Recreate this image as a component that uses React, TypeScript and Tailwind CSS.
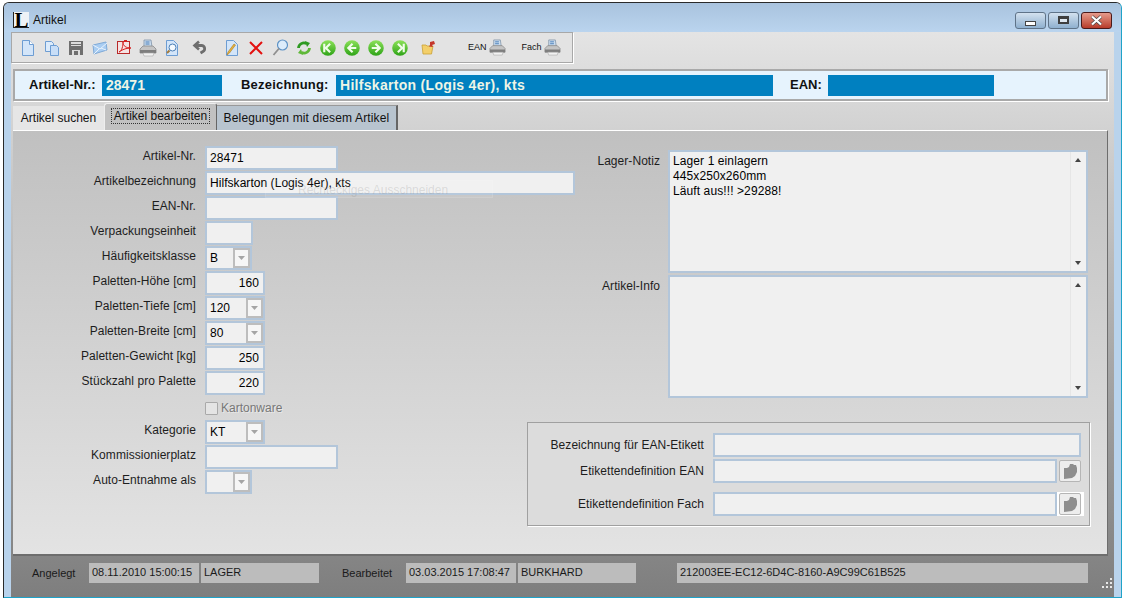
import React from "react";

const F = { fontFamily: '"Liberation Sans", Arial, sans-serif' };

function Page() {
  return (
    <svg width="16" height="18" viewBox="0 0 16 18">
      <path d="M2.5 1.5h7l4 4v11h-11z" fill="#d3e5f9" stroke="#6d9dd3" />
      <path d="M9.5 1.5v4h4" fill="#fff" stroke="#6d9dd3" />
    </svg>
  );
}
function Pages() {
  return (
    <svg width="16" height="18" viewBox="0 0 16 18">
      <path d="M1.5 2.5h6l2 2v8h-8z" fill="#dcebfb" stroke="#6d9dd3" />
      <path d="M6.5 6.5h6l2 2v8h-8z" fill="#c8def7" stroke="#6d9dd3" />
    </svg>
  );
}
function Save() {
  return (
    <svg width="16" height="16" viewBox="0 0 16 16">
      <rect x="1" y="1" width="14" height="14" fill="#6f6f6f" />
      <rect x="3" y="2" width="10" height="2" fill="#ddd" />
      <rect x="3" y="5" width="10" height="1" fill="#ddd" />
      <rect x="4" y="10" width="8" height="5" fill="#ddd" />
      <rect x="6" y="11" width="4" height="4" fill="#6f6f6f" />
    </svg>
  );
}
function Mail() {
  return (
    <svg width="16" height="14" viewBox="0 0 16 14">
      <path d="M1 4l13-3 1 8-13 4z" fill="#a9cdf2" stroke="#7fa9d6" />
      <path d="M1 4l7 4 7-6M2 13l5-5M14 9L9 7" fill="none" stroke="#e8f2fc" />
    </svg>
  );
}
function Pdf() {
  return (
    <svg width="17" height="17" viewBox="0 0 17 17">
      <rect x="1.5" y="2.5" width="12" height="12" fill="#f5e3e3" stroke="#b82a2a" />
      <path d="M3 13c3-1 4-6 4-10 0 4 3 6 8 6-4 0-8 1-12 4z" fill="none" stroke="#d62020" />
      <path d="M8 1h3v2H8z" fill="#d62020" />
    </svg>
  );
}
function Printer({ small }: { small?: boolean }) {
  const s = small ? 17 : 18;
  return (
    <svg width={s} height={s} viewBox="0 0 18 18">
      <path d="M5 1h7l1 7H5z" fill="#c9dcef" stroke="#7f93a8" strokeWidth="0.8" />
      <path d="M6.5 3h4M6.5 5h4" stroke="#4b7fb8" />
      <path d="M1 10l3-3h10l3 3v4H1z" fill="#c4c4c4" stroke="#8a8a8a" strokeWidth="0.8" />
      <path d="M1 11h16v3H1z" fill="#7e7e7e" />
      <path d="M4 14h11l-1 3H5z" fill="#f2f2f2" stroke="#a9a9a9" strokeWidth="0.6" />
    </svg>
  );
}
function Preview() {
  return (
    <svg width="16" height="18" viewBox="0 0 16 18">
      <path d="M2.5 1.5h7l4 4v11h-11z" fill="#d3e5f9" stroke="#6d9dd3" />
      <circle cx="8.5" cy="8.5" r="3.5" fill="#f5fafe" stroke="#4c7fb5" />
      <path d="M5.5 11.5L3 14" stroke="#a57b3c" strokeWidth="2" />
    </svg>
  );
}
function Undo() {
  return (
    <svg width="16" height="15" viewBox="0 0 16 15">
      <path d="M7 1.500L2.500 5.500 7 9.500" fill="none" stroke="#6e6e6e" strokeWidth="2.600" />
      <path d="M3.500 5.500H9.500a3.200 3.200 0 0 1 1.500 6L8.500 13" fill="none" stroke="#6e6e6e" strokeWidth="2.800" />
    </svg>
  );
}
function EditPage() {
  return (
    <svg width="16" height="18" viewBox="0 0 16 18">
      <path d="M2.5 1.5h7l4 4v11h-11z" fill="#d3e5f9" stroke="#6d9dd3" />
      <path d="M3 16l1-3 6-8 1.500 1-6 8z" fill="#e8b33c" stroke="#a87820" strokeWidth="0.6" />
    </svg>
  );
}
function Cross() {
  return (
    <svg width="14" height="14" viewBox="0 0 14 14">
      <path d="M1 1l12 12M13 1L1 13" stroke="#e3110f" strokeWidth="2" />
    </svg>
  );
}
function Search() {
  return (
    <svg width="17" height="17" viewBox="0 0 17 17">
      <circle cx="10.500" cy="6" r="5" fill="#dcecfb" stroke="#5e93c6" strokeWidth="1.200" />
      <path d="M7 9.500L1.500 16" stroke="#8f8f8f" strokeWidth="1.800" />
    </svg>
  );
}
function Refresh() {
  return (
    <svg width="16" height="14" viewBox="0 0 16 14">
      <path d="M2.500 7a5.500 5.500 0 0 1 8-4.500" fill="none" stroke="#2f9a22" strokeWidth="2.800" />
      <path d="M13.500 7a5.500 5.500 0 0 1-8 4.500" fill="none" stroke="#5fb838" strokeWidth="2.800" />
      <path d="M9 0l5 2-3 4z" fill="#2f9a22" />
      <path d="M7 14l-5-2 3-4z" fill="#5fb838" />
    </svg>
  );
}
function Nav({ d }: { d: string }) {
  return (
    <svg width="16" height="16" viewBox="0 0 15 15">
      <defs>
        <linearGradient id="navg" x1="0" y1="0" x2="0" y2="1">
          <stop offset="0" stopColor="#8de25a" />
          <stop offset="1" stopColor="#2ea317" />
        </linearGradient>
      </defs>
      <circle cx="7.500" cy="7.500" r="7.300" fill="url(#navg)" />
      <path d={d} fill="none" stroke="#f1fdea" strokeWidth="2" />
    </svg>
  );
}
function Folder() {
  return (
    <svg width="15" height="16" viewBox="0 0 15 16">
      <path d="M1 5h4l1 1h6l-1.500 8H2z" fill="#f3cf6a" stroke="#c9a136" strokeWidth="0.8" />
      <path d="M9 5V2l4-1 1 3-3 1 1 2-4-.5z" fill="#c4372b" />
    </svg>
  );
}
function Arrow() {
  return (
    <svg width="9" height="6" viewBox="0 0 9 6">
      <path d="M1 1h7L4.500 5z" fill="#a5a5a5" />
    </svg>
  );
}
function Leaf() {
  return (
    <svg width="18" height="18" viewBox="0 0 18 18">
      <path d="M3 6h3l2-1 1-3h3l1 1h2l1 3v4l-2 4-3 2-8 1z" fill="#8e8e8e" />
    </svg>
  );
}

function Input({
  w,
  right,
  children,
}: {
  w: string;
  right?: boolean;
  children?: React.ReactNode;
}) {
  return (
    <div
      className={`${w} h-[24px] shrink-0 border-2 border-[#b3c6da] bg-[#f0f0f0] text-[12px] leading-[20px] tracking-[0.05px] text-black ${
        right ? "pr-1 text-right" : "pl-[3px]"
      }`}
    >
      {children}
    </div>
  );
}

function Select({ w, children }: { w: string; children?: React.ReactNode }) {
  return (
    <div className={`${w} flex h-[24px] shrink-0 items-center justify-between border-2 border-[#b3c6da] bg-[#f0f0f0] pl-[3px] text-[12px] text-black`}>
      <span>{children}</span>
      <span className="flex h-[20px] w-[17px] items-center justify-center border-2 border-[#bdbdbd] bg-[#f6f6f6]">
        <Arrow />
      </span>
    </div>
  );
}

function Row({ label, children }: { label: string; children?: React.ReactNode }) {
  return (
    <div className="flex h-[25px] items-start">
      <div className="w-[183px] shrink-0 pt-[2px] text-right text-[12px] leading-[16px] tracking-[0.05px] text-[#1d1d1d]">{label}</div>
      <div className="ml-[9px] shrink-0">{children}</div>
    </div>
  );
}

function TextArea({ label, h, lines }: { label: string; h: string; lines?: string[] }) {
  return (
    <div className="flex items-start">
      <div className="w-[119px] shrink-0 pt-[3px] text-right text-[12px] leading-[16px] tracking-[0.05px] text-[#1d1d1d]">{label}</div>
      <div className={`relative ml-[8px] ${h} w-[420px] shrink-0 border-2 border-[#b3c6da] bg-[#f0f0f0] pl-[3px] pt-[2px] text-[12px] leading-[15px] tracking-[0.1px] text-black`}>
        {lines?.map((l) => <div key={l}>{l}</div>)}
        <div className="absolute inset-y-0 right-0 w-[16px] border-l border-[#e6e6e6] bg-[#f1f1f1]">
          <span className="absolute left-[4px] top-[6px] h-0 w-0 border-x-[3px] border-b-[4px] border-x-transparent border-b-[#444]" />
          <span className="absolute bottom-[6px] left-[4px] h-0 w-0 border-x-[3px] border-t-[4px] border-x-transparent border-t-[#444]" />
        </div>
      </div>
    </div>
  );
}

function LabelRow({ label, w, top, btn, ring }: { label: string; w: string; top: string; btn?: boolean; ring?: boolean }) {
  return (
    <div className={`flex items-center ${top}`}>
      <div className="w-[176px] shrink-0 text-right text-[12px] tracking-[0.05px] text-[#1d1d1d]">{label}</div>
      <div className="ml-[9px]">
        <Input w={w} />
      </div>
      {btn && (
        <div className={`flex h-[24px] w-[27px] items-center pl-[2px] ${ring ? "bg-white" : ""}`}>
          <div className="flex h-[22px] w-[22px] items-center justify-center rounded-[2px] border border-[#b5b5b5] bg-[#ededed]">
            <Leaf />
          </div>
        </div>
      )}
    </div>
  );
}

function Status({ w, ml, children }: { w: string; ml?: string; children?: React.ReactNode }) {
  return (
    <div className={`${w} ${ml ?? ""} h-[20px] shrink-0 bg-[#bcbcbc] pl-[3px] text-[11px] leading-[18px] text-[#1a1a1a]`}>{children}</div>
  );
}

function Tool({ w = "w-[24px]", children }: { w?: string; children: React.ReactNode }) {
  return <div className={`flex h-[26px] ${w} shrink-0 items-center justify-center`}>{children}</div>;
}

export default function App() {
  return (
    <div style={F} className="h-[601px] w-[1125px] overflow-hidden bg-white pl-[3px] pt-[2px]">
      <div className="flex h-[596px] w-[1119px] flex-col overflow-hidden rounded-t-[6px] border border-[#2a2a2a] border-b-[#1fa3c9] border-r-[#1fa3c9] bg-[#b9d3ec]">
        {/* Title bar */}
        <div className="flex h-[29px] shrink-0 items-center bg-gradient-to-b from-[#a9c3de] to-[#bad4ee] pl-[9px] pr-[8px] pt-[5px]">
          <div className="flex h-[16px] w-[16px] items-center justify-center border-b border-l border-[#222] bg-[#eef2f6] text-[21px] font-bold leading-[14px] text-black" style={{ fontFamily: '"Liberation Serif", serif' }}>
            L
          </div>
          <span className="ml-[4px] text-[12px] text-[#111]">Artikel</span>
          <div className="ml-auto flex gap-[2px] pr-[1px]">
            <div className="flex h-[17px] w-[31px] items-end justify-center rounded-[3px] border border-[#5f7388] bg-gradient-to-b from-[#d3e1ef] to-[#8fb0cf] pb-[2px]">
              <span className="h-[5px] w-[11px] border border-[#444] bg-white" />
            </div>
            <div className="flex h-[17px] w-[31px] items-center justify-center rounded-[3px] border border-[#5f7388] bg-gradient-to-b from-[#d3e1ef] to-[#8fb0cf]">
              <span className="h-[8px] w-[11px] border-2 border-t-[3px] border-[#3f3f3f] bg-[#dfe8f1]" />
            </div>
            <div className="flex h-[17px] w-[31px] items-center justify-center rounded-[3px] border border-[#4a1a1a] bg-gradient-to-b from-[#e59b8c] to-[#b73a2a]">
              <svg width="13" height="11" viewBox="0 0 13 11">
                <path d="M2 1.500l9 8M11 1.500l-9 8" stroke="#444" strokeWidth="3.400" />
                <path d="M2 1.500l9 8M11 1.500l-9 8" stroke="#fff" strokeWidth="2.200" />
              </svg>
            </div>
          </div>
        </div>

        {/* Client */}
        <div className="mx-[7px] flex min-h-0 flex-1 flex-col bg-gradient-to-b from-[#e4e4e4] to-[#7e7e7e]">
          <div className="flex h-[31px] w-[562px] shrink-0 items-center border border-[#a8a8a8] bg-[#e3e3e3] pl-[4px] shadow-[1px_1px_0_#fff]">
            <Tool><Page /></Tool>
            <Tool><Pages /></Tool>
            <Tool><Save /></Tool>
            <Tool><Mail /></Tool>
            <Tool><Pdf /></Tool>
            <Tool><Printer /></Tool>
            <Tool><Preview /></Tool>
            <Tool w="w-[32px]"><Undo /></Tool>
            <Tool w="w-[28px]"><span className="pl-[4px]"><EditPage /></span></Tool>
            <Tool><Cross /></Tool>
            <Tool><Search /></Tool>
            <Tool><Refresh /></Tool>
            <Tool><Nav d="M9.500 3.500L5.500 7.500l4 4M4 3.500v8" /></Tool>
            <Tool><Nav d="M8 3.500l-4 4 4 4M4.500 7.500H11.500" /></Tool>
            <Tool><Nav d="M7 3.500l4 4-4 4M10.500 7.500H3.500" /></Tool>
            <Tool><Nav d="M5.500 3.500l4 4-4 4M11 3.500v8" /></Tool>
            <Tool w="w-[32px]"><Folder /></Tool>
            <div className="ml-[24px] flex items-center gap-[2px] text-[9px] text-[#111]">
              EAN <Printer small />
            </div>
            <div className="ml-[16px] flex items-center gap-[2px] text-[9px] text-[#111]">
              Fach <Printer small />
            </div>
          </div>

          <div className="ml-[2px] mt-[6px] flex h-[32px] w-[1095px] shrink-0 items-center border-2 border-[#a9a9a9] bg-[#e6f3fd] text-[13px] font-bold text-[#111] shadow-[1px_1px_0_#fff]">
            <span className="ml-[14px] w-[73px]">Artikel-Nr.:</span>
            <div className="h-[21px] w-[120px] bg-[#0080c0] pl-[4px] text-[14px] leading-[21px] text-[#eef5e6]">28471</div>
            <span className="ml-[19px] w-[95px] tracking-[0.2px]">Bezeichnung:</span>
            <div className="h-[21px] w-[437px] bg-[#0080c0] pl-[4px] text-[14px] leading-[21px] tracking-[0.3px] text-[#eef5e6]">Hilfskarton (Logis 4er), kts</div>
            <span className="ml-[17px] w-[38px]">EAN:</span>
            <div className="h-[21px] w-[166px] bg-[#0080c0]" />
          </div>

          {/* Tabs */}
          <div className="ml-[2px] mt-[2px] flex h-[27px] shrink-0 items-end text-[12px]">
            <div className="flex h-[24px] w-[91px] items-center justify-center bg-[#e6e6e6] text-[#111]">Artikel suchen</div>
            <div className="flex h-[27px] w-[113px] items-center justify-center rounded-t-[3px] border-r border-t border-l border-r-[#666] border-t-[#eee] border-l-[#eee] bg-[#c1c1c1] pb-[3px] text-[#111]">
              <span className="border border-dotted border-[#333] px-[2px] leading-[14px]">Artikel bearbeiten</span>
            </div>
            <div className="flex h-[25px] w-[181px] items-center justify-center border-r-2 border-t border-[#666] border-t-[#999] bg-[#b8c4cf] tracking-[0.15px] text-[#111]">
              Belegungen mit diesem Artikel
            </div>
          </div>

          {/* Panel */}
          <div className="relative ml-[2px] flex h-[426px] w-[1095px] shrink-0 border-b-2 border-r border-t border-b-[#6d6d6d] border-r-[#6d6d6d] border-t-white bg-gradient-to-b from-[#c0c0c0] to-[#e3e3e3]">
            <div className="w-[528px] shrink-0 pt-[15px]">
              <Row label="Artikel-Nr."><Input w="w-[133px]">28471</Input></Row>
              <Row label="Artikelbezeichnung"><Input w="w-[370px]">Hilfskarton (Logis 4er), kts</Input></Row>
              <Row label="EAN-Nr."><Input w="w-[133px]" /></Row>
              <Row label="Verpackungseinheit"><Input w="w-[48px]" /></Row>
              <Row label="Häufigkeitsklasse"><Select w="w-[47px]">B</Select></Row>
              <Row label="Paletten-Höhe [cm]"><Input w="w-[60px]" right>160</Input></Row>
              <Row label="Paletten-Tiefe [cm]"><Select w="w-[60px]">120</Select></Row>
              <Row label="Paletten-Breite [cm]"><Select w="w-[60px]">80</Select></Row>
              <Row label="Paletten-Gewicht [kg]"><Input w="w-[60px]" right>250</Input></Row>
              <Row label="Stückzahl pro Palette"><Input w="w-[60px]" right>220</Input></Row>
              <div className="ml-[192px] flex h-[24px] items-center text-[12px] text-[#777] [text-shadow:1px_1px_0_#e8e8e8]">
                <span className="h-[13px] w-[13px] rounded-[1px] border border-[#a9a9a9] bg-[#e4e4e4]" />
                <span className="ml-[3px]">Kartonware</span>
              </div>
              <Row label="Kategorie"><Select w="w-[60px]">KT</Select></Row>
              <Row label="Kommissionierplatz"><Input w="w-[133px]" /></Row>
              <Row label="Auto-Entnahme als"><Select w="w-[47px]" /></Row>
            </div>
            <div className="flex w-[565px] shrink-0 flex-col pt-[19px]">
              <TextArea label="Lager-Notiz" h="h-[123px]" lines={["Lager 1 einlagern", "445x250x260mm", "Läuft aus!!! >29288!"]} />
              <div className="mt-[2px]">
                <TextArea label="Artikel-Info" h="h-[123px]" />
              </div>
              <div className="ml-[-14px] mt-[24px] h-[104px] w-[563px] border border-[#a0a0a0] bg-[#dcdcdc] shadow-[1px_1px_0_#fff]">
                <div className="pt-[10px]">
                  <LabelRow label="Bezeichnung für EAN-Etikett" w="w-[368px]" top="" />
                  <LabelRow label="Etikettendefinition EAN" w="w-[344px]" top="mt-[2px]" btn />
                  <LabelRow label="Etikettendefinition Fach" w="w-[344px]" top="mt-[9px]" btn ring />
                </div>
              </div>
            </div>
            <div className="absolute left-[252px] top-[49px] h-[18px] w-[228px] border border-white/10 bg-white/5 pl-[32px] text-[12px] leading-[18px] text-[#77777733]">
              Rechteckiges Ausschneiden
            </div>
          </div>

          {/* Status */}
          <div className="relative flex h-[34px] shrink-0 items-center pl-[21px] text-[11px] text-[#1a1a1a]">
            <span className="w-[57px]">Angelegt</span>
            <Status w="w-[110px]">08.11.2010 15:00:15</Status>
            <Status w="w-[118px]" ml="ml-[2px]">LAGER</Status>
            <span className="ml-[23px] w-[64px]">Bearbeitet</span>
            <Status w="w-[110px]">03.03.2015 17:08:47</Status>
            <Status w="w-[118px]" ml="ml-[2px]">BURKHARD</Status>
            <Status w="w-[411px]" ml="ml-[41px]">212003EE-EC12-6D4C-8160-A9C99C61B525</Status>
            <svg className="absolute bottom-[1px] right-0" width="12" height="12" viewBox="0 0 12 12">
              <path d="M8 1h2v2H8zM4 5h2v2H4zM8 5h2v2H8zM0 9h2v2H0zM4 9h2v2H4zM8 9h2v2H8z" fill="#e8e8e8" />
            </svg>
          </div>
        </div>
      </div>
    </div>
  );
}
